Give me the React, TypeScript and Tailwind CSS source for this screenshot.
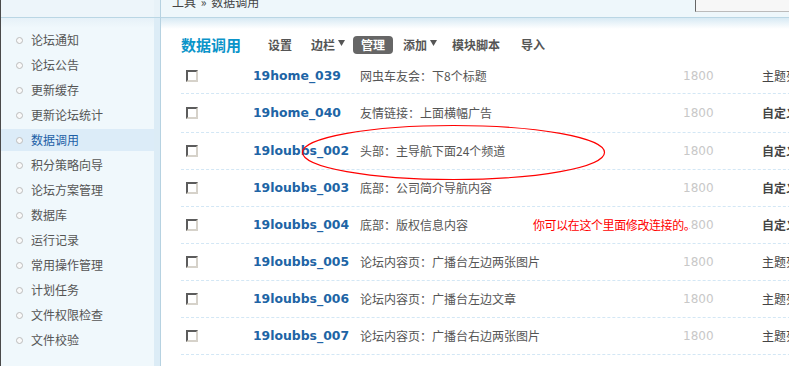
import React from "react";

const sideItems = [
  "论坛通知",
  "论坛公告",
  "更新缓存",
  "更新论坛统计",
  "数据调用",
  "积分策略向导",
  "论坛方案管理",
  "数据库",
  "运行记录",
  "常用操作管理",
  "计划任务",
  "文件权限检查",
  "文件校验",
];

const rows: { name: string; desc: string; type: string; bold: boolean }[] = [
  { name: "19home_039", desc: "网虫车友会：下8个标题", type: "主题列表", bold: false },
  { name: "19home_040", desc: "友情链接：上面横幅广告", type: "自定义", bold: true },
  { name: "19loubbs_002", desc: "头部：主导航下面24个频道", type: "自定义", bold: true },
  { name: "19loubbs_003", desc: "底部：公司简介导航内容", type: "自定义", bold: true },
  { name: "19loubbs_004", desc: "底部：版权信息内容", type: "自定义", bold: true },
  { name: "19loubbs_005", desc: "论坛内容页：广播台左边两张图片", type: "主题列表", bold: false },
  { name: "19loubbs_006", desc: "论坛内容页：广播台左边文章", type: "主题列表", bold: false },
  { name: "19loubbs_007", desc: "论坛内容页：广播台右边两张图片", type: "主题列表", bold: false },
];

const rowHeights = ["h-[36px]", "h-[39px]", "h-[37px]", "h-[37px]", "h-[37px]", "h-[37px]", "h-[37px]", "h-[37px]"];

function Arrow() {
  return (
    <svg width="7" height="6" viewBox="0 0 7 6" className="ml-[3px] -mt-[4px]">
      <polygon points="0,0 7,0 3.5,6" fill="#555" />
    </svg>
  );
}

export default function App() {
  return (
    <div className="relative w-[789px] h-[366px] overflow-hidden flex bg-white font-['Noto_Sans_CJK_SC','Noto_Sans',sans-serif] text-[12px] leading-[14px]">
      {/* Sidebar */}
      <div className="flex shrink-0 border-l border-[#4a4a4a] border-r border-r-[#b6d2e1]">
        <div className="w-[153px] flex flex-col">
          <div className="h-[18px] bg-[#edf5fa] border-b border-[#bad6e4]" />
          <div className="flex-1 pt-[11px] bg-[linear-gradient(to_bottom,#e6f1f8_0px,#f0f8fc_10px)]">
            {sideItems.map((t) => {
              const sel = t === "数据调用";
              return (
                <div
                  key={t}
                  className={
                    "h-[22px] mb-[3px] flex items-center " +
                    (sel ? "bg-[#dcecf8]" : "")
                  }
                >
                  <span className="ml-[15px] w-[7px] h-[7px] rounded-full border border-[#bcbcbc] bg-[#fafafa]" />
                  <span
                    className={
                      "ml-[8px] " + (sel ? "text-[#1d5fa6]" : "text-[#555]")
                    }
                  >
                    {t}
                  </span>
                </div>
              );
            })}
          </div>
        </div>
        <div className="w-[6px] flex flex-col">
          <div className="h-[18px] bg-[#e8f2f8] border-b border-[#bad6e4]" />
          <div className="flex-1 bg-[#dcecf6]" />
        </div>
      </div>

      {/* Main */}
      <div className="flex-1 min-w-0 flex flex-col overflow-hidden">
        <div className="h-[18px] shrink-0 flex justify-between bg-[#eef7fb] border-b border-[#bad6e4]">
          <div className="pl-[11px] -mt-[5px] leading-[14px] text-[#444] whitespace-pre">
            工具 <span className="px-[2px]">»</span> 数据调用
          </div>
          <div className="w-[94px] h-[12px] bg-[#f7f7f7] border-l border-[#666] border-b border-b-[#bbb]" />
        </div>
        <div className="flex-1 pl-[20px] bg-[linear-gradient(to_bottom,#d8eaf4_0px,#ffffff_11px)]">
          {/* Title + nav */}
          <div className="h-[40px] pt-[14px] flex items-center font-bold text-[#555]">
            <div className="w-[87px] text-[15px] text-[#0b94c9]">数据调用</div>
            <span>设置</span>
            <span className="ml-[19px] w-[34px] flex items-center">
              边栏
              <Arrow />
            </span>
            <span className="ml-[8px] px-[8px] h-[18px] flex items-center rounded-[4px] bg-[#666] text-white">
              管理
            </span>
            <span className="ml-[10px] w-[34px] flex items-center">
              添加
              <Arrow />
            </span>
            <span className="ml-[15px]">模块脚本</span>
            <span className="ml-[21px]">导入</span>
          </div>

          {/* Rows */}
          <div className="w-[640px]">
            {rows.map((r, i) => (
              <div
                key={r.name}
                className={
                  "relative flex items-center border-b border-dashed border-[#d3e7f5] " +
                  rowHeights[i]
                }
              >
                <div className="w-[72px] pl-[5px] flex items-center">
                  <span className="w-[12px] h-[12px] bg-white border-2 border-t-[#5c5c5c] border-l-[#5c5c5c] border-r-[#d6d2ca] border-b-[#d6d2ca]" />
                </div>
                <div className="w-[107px] font-['DejaVu_Sans',sans-serif] font-bold text-[12.4px] text-[#2064a5]">
                  {r.name}
                </div>
                <div className="w-[323px] text-[#555]">{r.desc}</div>
                <div className="w-[79px] font-['DejaVu_Sans',sans-serif] text-[12px] text-[#c8c8c8]">
                  1800
                </div>
                <div
                  className={
                    "whitespace-nowrap text-[#444] " + (r.bold ? "font-bold" : "")
                  }
                >
                  {r.type}
                </div>
                {i === 4 && (
                  <span className="absolute left-[352px] top-[11px] w-[156px] bg-white text-[#ff0000] tracking-[-0.4px] whitespace-nowrap overflow-visible">
                    你可以在这个里面修改连接的。
                  </span>
                )}
              </div>
            ))}
          </div>
        </div>
      </div>

      {/* Red ellipse annotation */}
      <svg
        className="absolute left-[301px] top-[124px]"
        width="305"
        height="58"
        viewBox="0 0 305 58"
      >
        <ellipse
          cx="152.5"
          cy="28.5"
          rx="151"
          ry="27"
          fill="none"
          stroke="#ff0000"
          strokeWidth="1.2"
        />
      </svg>
    </div>
  );
}
